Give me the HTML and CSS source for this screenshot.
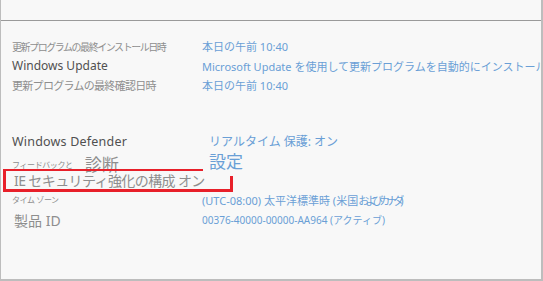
FILE: index.html
```html
<!DOCTYPE html>
<html lang="ja">
<head>
    <meta charset="UTF-8">
    <title>プロパティ</title>
    <link rel="stylesheet" href="styles.css">
</head>
<body>
    <div class="window">
        <div class="header"></div>

        <div class="props">
            <div class="row r1">
                <span class="label narrow">更新プログラムの最終インストール日時</span>
                <span class="value">本日の午前 10:40</span>
            </div>
            <div class="row r2">
                <span class="label heading">Windows Update</span>
                <span class="value small">Microsoft Update を使用して更新プログラムを自動的にインストールする</span>
            </div>
            <div class="row r3">
                <span class="label mid">更新プログラムの最終確認日時</span>
                <span class="value">本日の午前 10:40</span>
            </div>

            <div class="row r4">
                <span class="label heading wider">Windows Defender</span>
                <span class="value wide shift">リアルタイム 保護: オン</span>
            </div>
            <div class="row r5">
                <span class="label"><span class="tiny">フィードバックと</span><span class="big diag">診断</span></span>
                <span class="value big shift">設定</span>
            </div>
            <div class="row r6">
                <span class="label big free">IE セキュリティ強化の構成 オン</span>
            </div>
            <div class="row r7">
                <span class="label tiny">タイム ゾーン</span>
                <span class="value">(UTC-08:00) 太平洋標準時 (米国<span class="squeeze">およびカナダ</span>)</span>
            </div>
            <div class="row r8">
                <span class="label big product">製品 ID</span>
                <span class="value xsmall">00376-40000-00000-AA964 (アクティブ)</span>
            </div>

            <div class="highlight">
                <div class="hl-top"></div>
                <div class="hl-right"></div>
            </div>
        </div>
    </div>
</body>
</html>
```

FILE: styles.css
```css
body {
    margin: 0;
    background-color: #ffffff;
    font-family: 'Noto Sans', 'Noto Sans CJK JP', sans-serif;
}

.window {
    width: 543px;
    height: 281px;
    box-sizing: border-box;
    background-color: #f8f8f8;
    border-left: 1px solid #bdbdbd;
    border-right: 2px solid #bdbdbd;
    border-bottom: 2px solid #bdbdbd;
    overflow: hidden;
}

.header {
    height: 20px;
    border-bottom: 1px solid #9a9a9a;
}

.props {
    position: relative;
    padding-top: 15px;
}

.row {
    display: flex;
    align-items: center;
    white-space: nowrap;
    padding-left: 11px;
}

.r1 { height: 20px; }
.r2 { height: 19px; }
.r3 { height: 19px; }
.r4 { height: 20px; margin-top: 37px; }
.r5 { height: 19px; }
.r6 { height: 20px; }
.r7 { height: 19px; }
.r8 { height: 21px; }

.label {
    width: 190px;
    flex-shrink: 0;
    font-size: 11px;
    color: #8e8e8e;
}

.label.narrow {
    font-size: 10px;
    letter-spacing: -1.45px;
}

.label.mid {
    font-size: 11px;
    letter-spacing: -0.7px;
}

.heading {
    font-size: 12px;
    color: #505050;
}

.heading.wider {
    font-size: 12.5px;
    letter-spacing: 0.2px;
}

.value {
    font-size: 11px;
    color: #6a9fd6;
}

.value.small {
    font-size: 11px;
}

.value.xsmall {
    font-size: 10px;
}

.value.wide {
    font-size: 12px;
}

.value.shift {
    margin-left: 7px;
}

.squeeze {
    letter-spacing: -4px;
}

.tiny {
    font-size: 8px;
    letter-spacing: -0.4px;
    color: #8e8e8e;
}

.big {
    font-size: 15px;
    color: #8e8e8e;
}

.value.big {
    font-size: 17px;
    color: #6a9fd6;
}

.diag {
    font-size: 17px;
    margin-left: 12px;
    position: relative;
    top: 3px;
}

.label.free {
    width: auto;
    margin-left: 2px;
    font-size: 14px;
    letter-spacing: -0.6px;
}

.label.product {
    font-size: 14px;
    padding-left: 2px;
    box-sizing: border-box;
}

/* red annotation box */
.highlight {
    position: absolute;
    left: 2px;
    top: 148px;
    width: 230px;
    height: 23px;
    box-sizing: border-box;
    border-left: 3px solid #e8202a;
    border-bottom: 3px solid #e8202a;
}

.hl-top {
    position: absolute;
    left: 0;
    top: 0;
    width: 197px;
    height: 2px;
    background-color: #e8202a;
}

.hl-right {
    position: absolute;
    right: 0;
    top: 7px;
    bottom: 0;
    width: 3px;
    background-color: #e8202a;
}
```
